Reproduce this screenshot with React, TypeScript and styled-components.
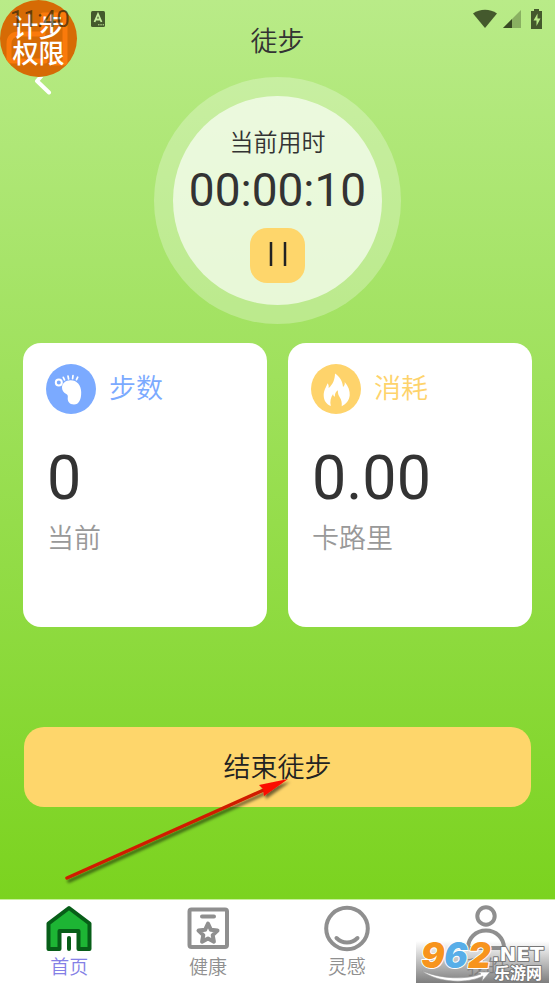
import React from "react";
import styled, { createGlobalStyle } from "styled-components";

const GlobalStyle = createGlobalStyle`
  *, *::before, *::after { box-sizing: border-box; }
  body {
    margin: 0;
    color: #333;
    font-family: Roboto, "Noto Sans CJK SC", sans-serif;
  }
  button { font: inherit; color: inherit; border: 0; padding: 0; cursor: pointer; }
`;

const Page = styled.div`
  position: relative;
  display: flex;
  flex-direction: column;
  min-height: 100vh;
  overflow: hidden;
`;

const Screen = styled.main`
  flex: 1;
  display: flex;
  flex-direction: column;
  padding: 0 24px 92px;
  background: linear-gradient(#b9eb88, #7bd31f);
`;

const StatusBar = styled.div`
  position: absolute;
  z-index: 3;
  top: 0;
  left: 0;
  right: 0;
  display: flex;
  align-items: center;
  height: 38px;
  padding: 0 8px 0 10px;
  color: rgba(30, 40, 15, 0.75);
  pointer-events: none;
`;

const Clock = styled.time`
  color: rgba(30, 30, 10, 0.65);
  font-size: 24px;
  line-height: 38px;
`;

const KeyboardMark = styled.svg`
  margin-left: 20px;
`;

const StatusIcons = styled.div`
  display: flex;
  align-items: center;
  gap: 6px;
  margin-left: auto;
`;

const Title = styled.h1`
  margin: 0;
  padding-top: 22px;
  font-size: 27px;
  font-weight: 350;
  line-height: 40px;
  text-align: center;
`;

const Stage = styled.section`
  display: grid;
  grid-template-columns: 1fr auto 1fr;
  align-items: start;
  margin-top: 15px;
`;

const BackButton = styled.button`
  justify-self: start;
  width: 40px;
  height: 20px;
  background: none;
`;

const Ring = styled.div`
  padding: 19px;
  border-radius: 50%;
  background: rgba(255, 255, 255, 0.27);
`;

const Dial = styled.div`
  display: flex;
  flex-direction: column;
  align-items: center;
  width: 209px;
  height: 209px;
  padding-top: 31px;
  border-radius: 50%;
  background: rgba(255, 255, 255, 0.65);
`;

const DialLabel = styled.div`
  font-size: 24px;
  font-weight: 350;
  line-height: 32px;
`;

const Elapsed = styled.div`
  font-size: 46px;
  line-height: 62px;
`;

const PauseButton = styled.button`
  display: grid;
  place-items: center;
  width: 55px;
  height: 55px;
  margin-top: 7px;
  padding-bottom: 3px;
  border-radius: 17px;
  background: #fed66b;
`;

const Cards = styled.section`
  display: grid;
  grid-template-columns: 1fr 1fr;
  gap: 21px;
  margin: 19px -1px 0;
`;

const Card = styled.article`
  min-height: 284px;
  padding: 21px 24px;
  border-radius: 18px;
  background: #fff;
`;

const CardHead = styled.div<{ $color: string }>`
  display: flex;
  align-items: center;
  gap: 13px;
  margin-left: -1px;
  color: ${(p) => p.$color};
`;

const CardTitle = styled.h2`
  margin: 0;
  font-size: 27px;
  font-weight: 350;
  line-height: 50px;
`;

const Value = styled.div`
  margin-top: 28px;
  font-size: 61px;
  line-height: 72px;
`;

const Unit = styled.div`
  margin-top: 5px;
  color: #999;
  font-size: 27px;
  font-weight: 350;
  line-height: 40px;
`;

const EndButton = styled.button`
  height: 80px;
  margin-top: 100px;
  padding-bottom: 4px;
  border-radius: 20px;
  background: #fed66b;
  && {
    color: #222;
    font-size: 27px;
    font-weight: 350;
  }
`;

const TabBar = styled.nav`
  display: grid;
  grid-template-columns: repeat(4, 1fr);
  height: 90px;
  border-top: 1px solid #c8f09c;
  background: #fff;
`;

const Tab = styled.a<{ $active?: boolean }>`
  display: flex;
  flex-direction: column;
  align-items: center;
  gap: 1px;
  padding-top: 5px;
  color: ${(p) => (p.$active ? "#8480e6" : "#8f8f8f")};
  font-size: 19px;
  font-weight: 350;
  line-height: 28px;
  text-decoration: none;
`;

const FloatingBadge = styled.button`
  position: absolute;
  z-index: 2;
  top: 0;
  left: 0;
  display: grid;
  place-items: center;
  width: 77px;
  height: 77px;
  border-radius: 50%;
  background: #d66b05;
  overflow: hidden;
  && {
    color: #fff;
    font-size: 26px;
    font-weight: 500;
    line-height: 26px;
  }
`;

const BadgeLayer = styled.span`
  grid-area: 1 / 1;
  z-index: 1;
  padding-top: 4px;
`;

const BadgeArt = styled.svg`
  grid-area: 1 / 1;
`;

const Pointer = styled.svg`
  position: absolute;
  z-index: 2;
  left: 60px;
  bottom: 99px;
  pointer-events: none;
`;

const Watermark = styled.svg`
  position: absolute;
  z-index: 2;
  right: 6px;
  bottom: 0;
  pointer-events: none;
`;

const FootIcon = () => (
  <svg width="50" height="50" viewBox="0 0 50 50" aria-hidden="true">
    <circle cx="25" cy="25" r="25" fill="#7baaff" />
    <circle cx="12.8" cy="18.4" r="3" fill="none" stroke="#fff" strokeWidth="2" />
    <g stroke="#fff" strokeWidth="1.7" strokeLinecap="round">
      <path d="M17.300 13.300l1.200 2.500M22 12l.6 3M27 11.700l-.4 3M31.700 13.200l-1.200 2.500" />
    </g>
    <path fill="#fff" d="M16 23.500c0-4.500 4-7.300 8.500-7.300 6.500 0 10.500 4.800 10.700 11.800.1 7.500-2.200 12.600-7.200 12.600-4.700 0-6.800-3.300-6.200-7.500.2-1.500-.3-2.200-1.600-3-2.700-1.700-4.200-3.900-4.200-6.600z" />
  </svg>
);

const FlameIcon = () => (
  <svg width="50" height="50" viewBox="0 0 50 50" aria-hidden="true">
    <circle cx="25" cy="25" r="25" fill="#fed36b" />
    <path
      fill="#fff"
      d="M24 9.500C29 13 31.500 17 32 23c1.600-1.200 2-2.900 1.700-5 3.700 4.500 5.300 8.700 5 13.300-.4 5-3.300 8.700-8 11 .3-3.500-.2-6.500-2-9-1.200-1.800-2-3.700-1.800-7-2.300 1.400-3.200 3.600-3 6.500-1.200-.5-1.800-1.400-1.800-2.800-2.500 3.700-3.300 7.600-2.300 12.100-4.800-2.200-7-5.800-7.100-10.600-.1-5 2.300-8 3.900-12.200 1.200 1.700 1.300 3.100 1 4.800 4.300-3.800 6.300-8.500 6.400-14.600z"
    />
  </svg>
);

const HomeIcon = () => (
  <svg width="48" height="48" viewBox="0 0 48 48" fill="#1db534" stroke="#075e18" strokeWidth="4" strokeLinejoin="round" strokeLinecap="round" aria-hidden="true">
    <path d="M24 3L44.500 18.500V44H33.500V26H14.500V44H3.500V18.500z" />
    <path d="M24 33v11" />
  </svg>
);

const HealthIcon = () => (
  <svg width="48" height="48" viewBox="0 0 48 48" fill="none" stroke="#8f8f8f" strokeWidth="4" strokeLinejoin="round" strokeLinecap="round" aria-hidden="true">
    <rect x="5.500" y="4.500" width="37.500" height="37.500" rx="2" />
    <path d="M18 11.500h12" />
    <path d="M24 18.500l2.900 6.300 6.600.8-4.800 4.500 1.200 6.600-5.900-3.100-5.900 3.100 1.200-6.600-4.800-4.500 6.600-.8z" />
  </svg>
);

const SmileIcon = () => (
  <svg width="48" height="48" viewBox="0 0 48 48" fill="none" stroke="#8f8f8f" strokeWidth="4" strokeLinecap="round" aria-hidden="true">
    <circle cx="24" cy="23.500" r="20.800" />
    <path d="M13.500 33c6 6 15 6 21 0" />
  </svg>
);

const PersonIcon = () => (
  <svg width="48" height="48" viewBox="0 0 48 48" fill="none" stroke="#8f8f8f" strokeWidth="4" strokeLinecap="round" strokeLinejoin="round" aria-hidden="true">
    <circle cx="24" cy="11" r="8.700" />
    <path d="M6 43c0-10 8-17.500 18-17.500S42 33 42 43z" />
  </svg>
);

const stats = [
  { title: "步数", value: "0", unit: "当前", color: "#7baaff", icon: <FootIcon /> },
  { title: "消耗", value: "0.00", unit: "卡路里", color: "#fed36b", icon: <FlameIcon /> },
];

const tabs = [
  { label: "首页", icon: <HomeIcon />, active: true },
  { label: "健康", icon: <HealthIcon /> },
  { label: "灵感", icon: <SmileIcon /> },
  { label: "我的", icon: <PersonIcon /> },
];

const logoDigits = [
  { digit: "9", x: 5, color: "#f7941d" },
  { digit: "6", x: 28, color: "#58aee8" },
  { digit: "2", x: 52, color: "#f7941d" },
];

export default function App() {
  return (
    <Page lang="zh-CN">
      <GlobalStyle />
      <StatusBar>
        <Clock>11:40</Clock>
        <KeyboardMark width="16" height="16" viewBox="0 0 16 16" aria-hidden="true">
          <rect x="1" y="0" width="14" height="16" rx="1.500" fill="currentColor" />
          <path d="M4.500 11L8 3l3.500 8M5.700 8.500h4.600" fill="none" stroke="#c5ee9c" strokeWidth="1.800" />
          <path d="M8 13.800h6" stroke="#c5ee9c" strokeDasharray="1.500 .8" />
        </KeyboardMark>
        <StatusIcons>
          <svg width="24" height="20" viewBox="0 0 24 20" aria-hidden="true">
            <path d="M0 4.500C7-.5 17-.5 24 4.500L12 19z" fill="currentColor" />
          </svg>
          <svg width="18" height="18" viewBox="0 0 18 18" aria-hidden="true">
            <path d="M0 18L18 0v18z" fill="currentColor" opacity=".4" />
            <path d="M0 18L9 9v9z" fill="currentColor" />
          </svg>
          <svg width="20" height="20" viewBox="0 0 20 20" aria-hidden="true">
            <path d="M7 0h5v2h3v18H4V2h3z" fill="currentColor" />
            <path d="M10.500 4.500L6.500 11.500h3v5.500l4-7.500h-3z" fill="#b9ea87" />
          </svg>
        </StatusIcons>
      </StatusBar>

      <FloatingBadge type="button" aria-label="计步权限">
        <BadgeArt width="77" height="77" viewBox="0 0 77 77" fill="none" stroke="#fa7a0b" strokeWidth="5" aria-hidden="true">
          <path d="M9 61V44q0-10 10-10h24V15h22v48H53M12 61h12M31 61h14" strokeLinejoin="round" strokeLinecap="round" />
        </BadgeArt>
        <BadgeLayer>
          计步
          <br />
          权限
        </BadgeLayer>
      </FloatingBadge>

      <Screen>
        <Title>徒步</Title>
        <Stage>
          <BackButton type="button" aria-label="返回">
            <svg width="40" height="20" viewBox="0 0 40 20" fill="none" stroke="#fff" strokeWidth="4" strokeLinecap="round" strokeLinejoin="round" aria-hidden="true">
              <path d="M22 -6L13 4L25 15.500" />
            </svg>
          </BackButton>
          <Ring>
            <Dial>
              <DialLabel>当前用时</DialLabel>
              <Elapsed role="timer">00:00:10</Elapsed>
              <PauseButton type="button" aria-label="暂停">
                <svg width="20" height="24" viewBox="0 0 20 24" aria-hidden="true">
                  <path d="M3 0v24M17 0v24" stroke="#222" strokeWidth="2.500" />
                </svg>
              </PauseButton>
            </Dial>
          </Ring>
        </Stage>

        <Cards>
          {stats.map((s) => (
            <Card key={s.title}>
              <CardHead $color={s.color}>
                {s.icon}
                <CardTitle>{s.title}</CardTitle>
              </CardHead>
              <Value>{s.value}</Value>
              <Unit>{s.unit}</Unit>
            </Card>
          ))}
        </Cards>

        <EndButton type="button">结束徒步</EndButton>
      </Screen>

      <TabBar>
        {tabs.map((t) => (
          <Tab key={t.label} href="#" $active={t.active} aria-current={t.active ? "page" : undefined}>
            {t.icon}
            {t.label}
          </Tab>
        ))}
      </TabBar>

      <Pointer width="240" height="124" viewBox="0 0 240 124" aria-hidden="true">
        <defs>
          <filter id="arrowShadow" x="-10%" y="-10%" width="120%" height="130%">
            <feDropShadow dx="2" dy="3" stdDeviation="1.500" floodColor="#000" floodOpacity=".55" />
          </filter>
        </defs>
        <g filter="url(#arrowShadow)">
          <path d="M7 112L206 23" stroke="#d01c05" strokeWidth="3.500" strokeLinecap="round" />
          <path d="M228 13L199 19L203 23L204 30z" fill="#fb0a05" />
        </g>
      </Pointer>

      <Watermark width="133" height="60" viewBox="0 -12 133 60" role="img" aria-label="962.NET 乐游网">
        <defs>
          <linearGradient id="shade" x1="0" y1="0" x2="0" y2="1">
            <stop offset="0" stopColor="#777" stopOpacity="0" />
            <stop offset="1" stopColor="#777" stopOpacity=".95" />
          </linearGradient>
        </defs>
        <rect width="133" height="42" fill="url(#shade)" />
        <path d="M6 30C22 42 52 43 67 35l-1 5 8-9-12 0 3 2C50 39 25 38 6 30z" fill="#fff" stroke="#999" strokeWidth=".6" />
        <g
          stroke="#fff"
          strokeWidth="2"
          paintOrder="stroke"
          strokeLinejoin="round"
          fontFamily="Inter, sans-serif"
          fontWeight="900"
          fontStyle="italic"
          fontSize="35"
        >
          {logoDigits.map((d) => (
            <text key={d.digit} x={d.x} y="27" fill={d.color}>
              {d.digit}
            </text>
          ))}
        </g>
        <g fill="#fff" stroke="#777" strokeWidth="2" paintOrder="stroke" strokeLinejoin="round">
          <text x="76" y="20" fontFamily="'DejaVu Sans', sans-serif" fontWeight="700" fontSize="20">.NET</text>
          <text x="78" y="38" fontFamily="'Noto Sans CJK SC', sans-serif" fontWeight="700" fontSize="16">乐游网</text>
        </g>
      </Watermark>
    </Page>
  );
}
